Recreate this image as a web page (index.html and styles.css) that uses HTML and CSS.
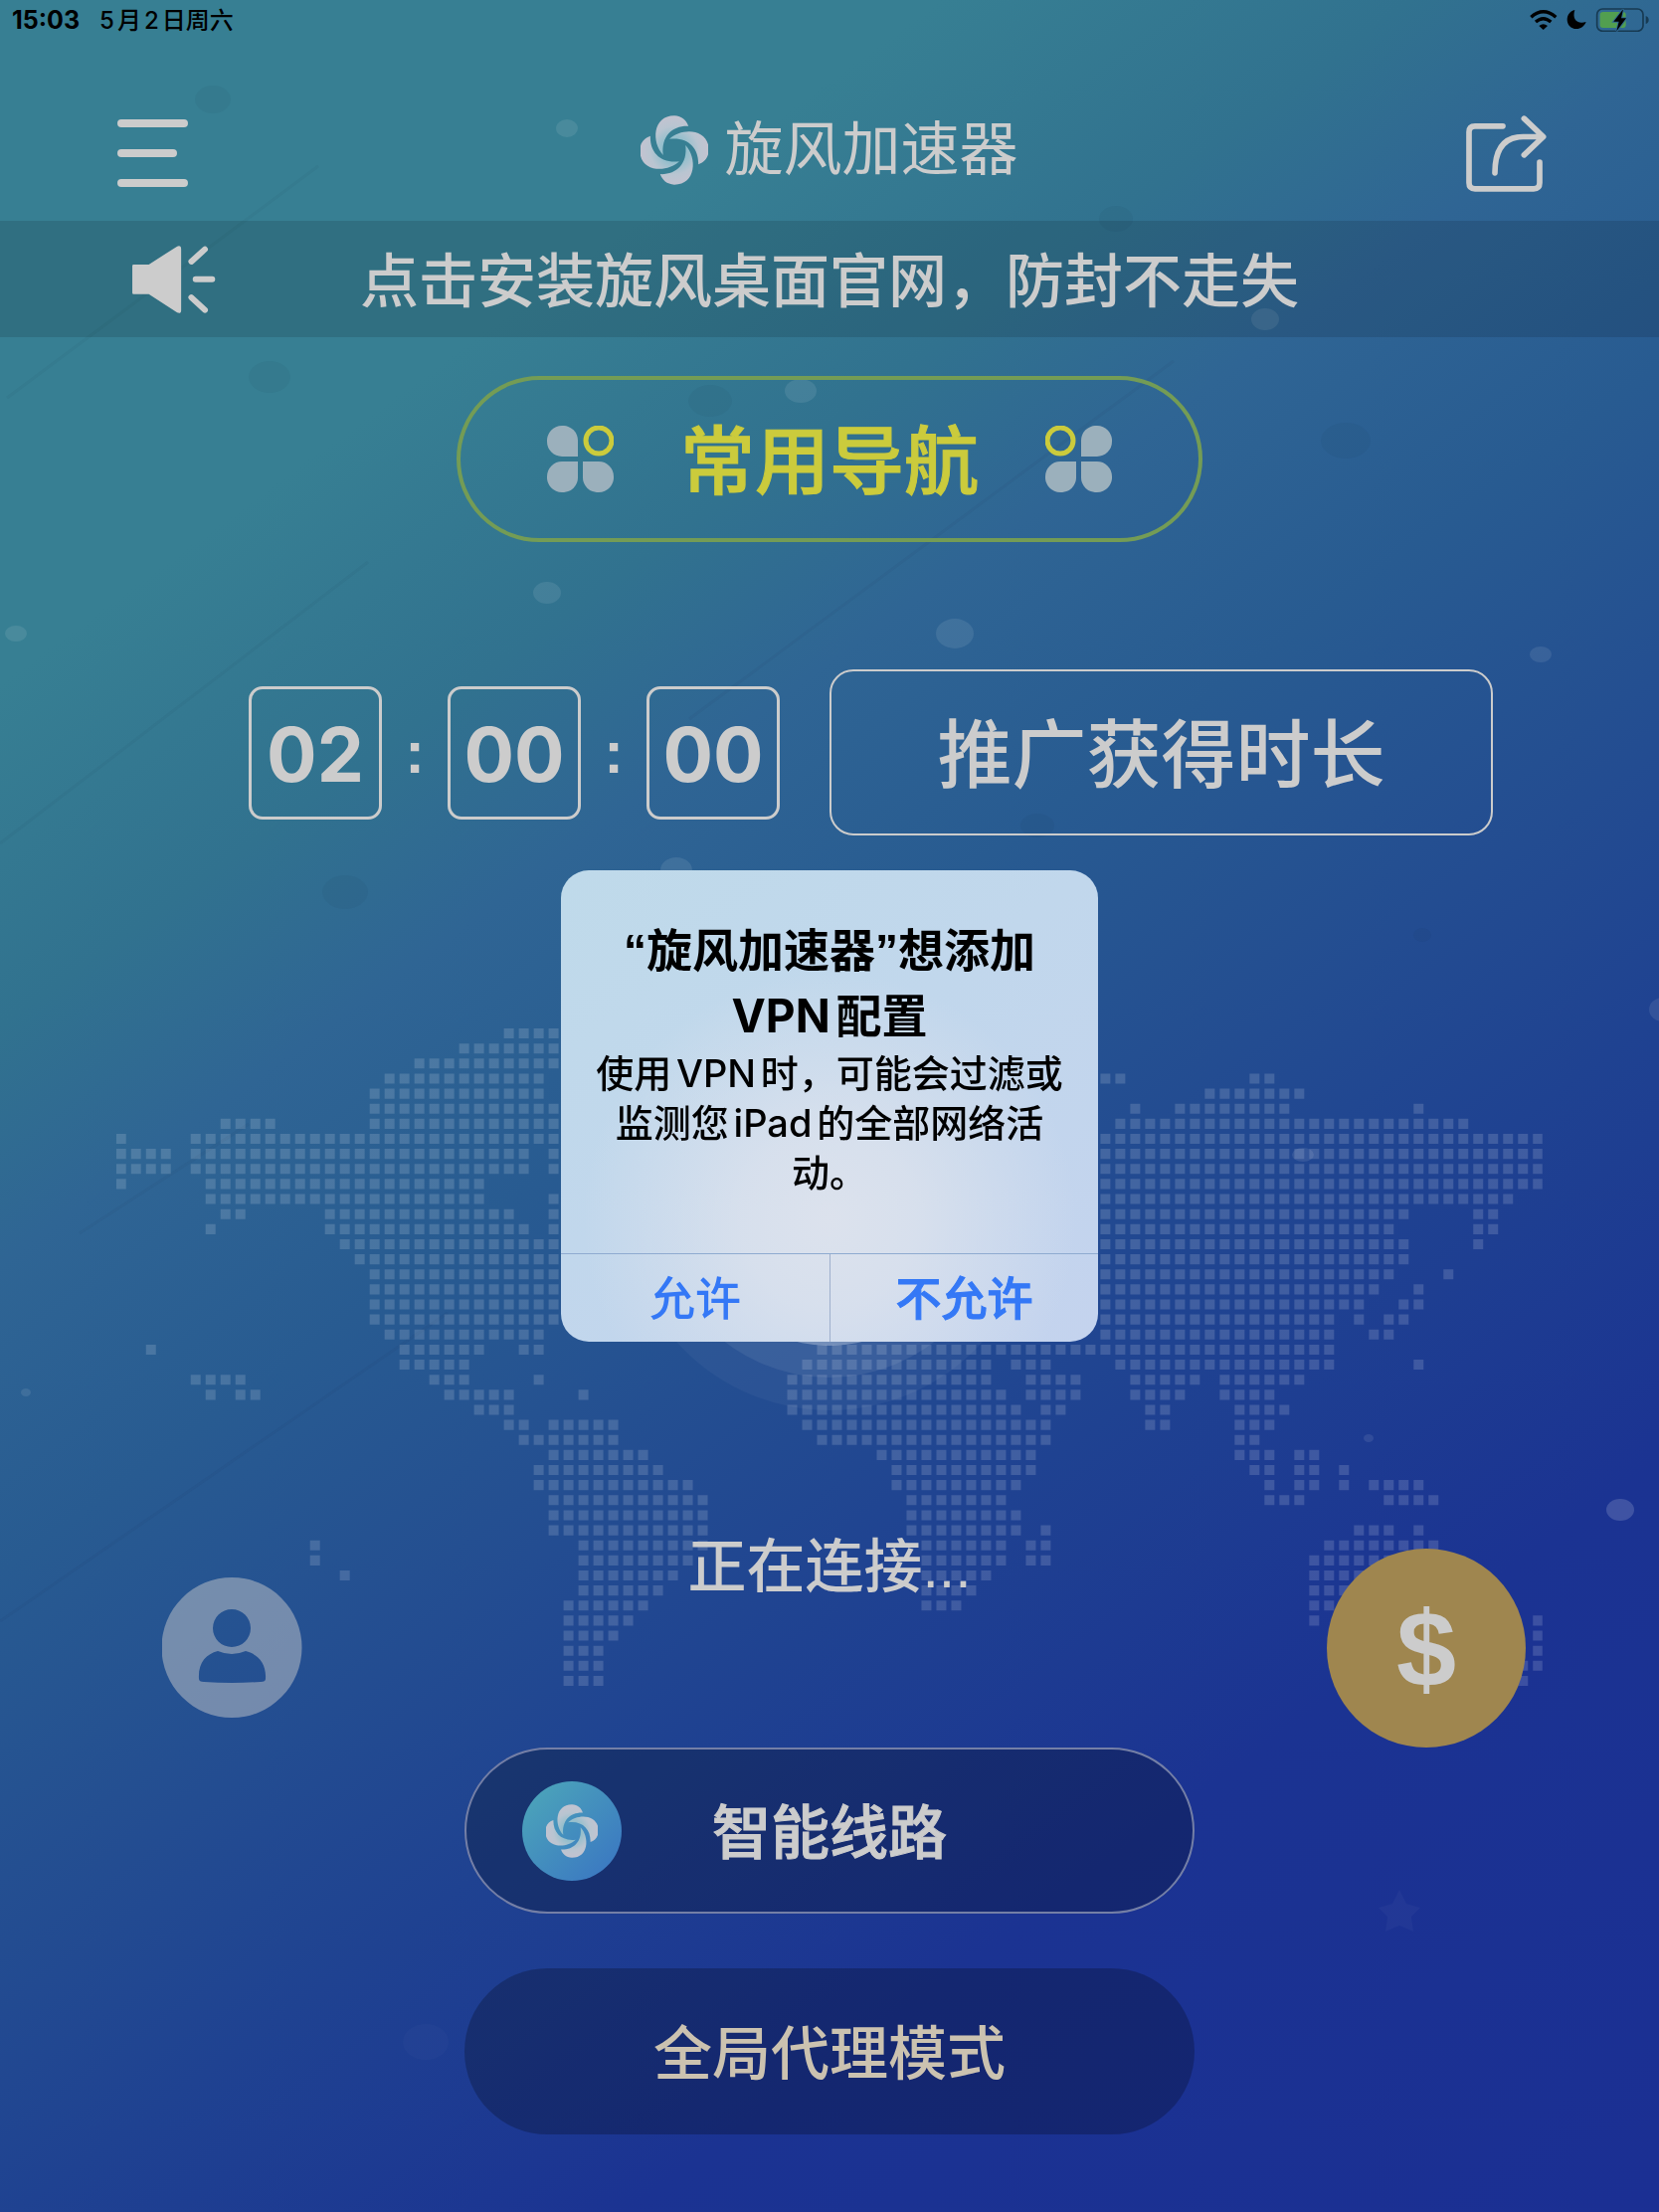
FILE: index.html
```html
<!DOCTYPE html>
<html lang="zh-CN">
<head>
<meta charset="utf-8">
<meta name="viewport" content="width=device-width, initial-scale=1">
<title>旋风加速器</title>
<link rel="stylesheet" href="styles.css">
</head>
<body>
<svg class="defs" aria-hidden="true">
  <defs>
    <radialGradient id="blade" gradientUnits="userSpaceOnUse" cx="125" cy="135" r="105">
      <stop offset="0.3" stop-color="#8bbdcb"/>
      <stop offset="0.7" stop-color="#b9c5d1"/>
      <stop offset="1" stop-color="#c3c3d0"/>
    </radialGradient>
    <symbol id="swirl" viewBox="24 29 202 212">
      <g fill="url(#blade)">
        <path d="M91 150C55 112 58 30 125 30C148 31 162 44 168 62C120 60 84 92 91 150Z"/>
        <path transform="rotate(90 125 135)" d="M91 150C55 112 58 30 125 30C148 31 162 44 168 62C120 60 84 92 91 150Z"/>
        <path transform="rotate(180 125 135)" d="M91 150C55 112 58 30 125 30C148 31 162 44 168 62C120 60 84 92 91 150Z"/>
        <path transform="rotate(270 125 135)" d="M91 150C55 112 58 30 125 30C148 31 162 44 168 62C120 60 84 92 91 150Z"/>
      </g>
    </symbol>
    <symbol id="clover" viewBox="0 0 67 67">
      <g fill="#9bb0bc">
        <path d="M15 0A15 15 0 0 1 31 16V31H15A15 15 0 0 1 0 16A15 15 0 0 1 15 0Z"/>
        <path d="M31 36H15A15 15 0 0 0 0 51A15 15 0 0 0 15 67A15 15 0 0 0 31 51Z"/>
        <path d="M36 36H52A15 15 0 0 1 67 51A15 15 0 0 1 52 67A15 15 0 0 1 36 51Z"/>
      </g>
      <circle cx="52" cy="15" r="13" fill="none" stroke="#cbcb3c" stroke-width="5"/>
    </symbol>
  </defs>
</svg>

<div class="app">
  <svg class="bubbles" viewBox="0 0 1668 2224" preserveAspectRatio="none" aria-hidden="true">
    <g fill="#fff" fill-opacity="0.09">
      <ellipse cx="570" cy="129" rx="11" ry="9"/>
      <ellipse cx="805" cy="393" rx="16" ry="12"/>
      <ellipse cx="1272" cy="321" rx="14" ry="11"/>
      <ellipse cx="550" cy="596" rx="14" ry="11"/>
      <ellipse cx="960" cy="637" rx="19" ry="15"/>
      <ellipse cx="16" cy="637" rx="11" ry="8"/>
      <ellipse cx="1549" cy="658" rx="11" ry="8"/>
      <ellipse cx="680" cy="875" rx="16" ry="13"/>
      <ellipse cx="1310" cy="1161" rx="11" ry="7"/>
      <ellipse cx="1376" cy="1446" rx="5" ry="4"/>
      <ellipse cx="26" cy="1400" rx="5" ry="4"/>
      <ellipse cx="1672" cy="1015" rx="14" ry="12"/>
    </g>
    <ellipse cx="1629" cy="1518" rx="14" ry="11" fill="#fff" fill-opacity="0.16"/>
    <ellipse cx="428" cy="2053" rx="23" ry="18" fill="#fff" fill-opacity="0.02"/>
    <g fill="#123" fill-opacity="0.05">
      <ellipse cx="214" cy="100" rx="18" ry="14"/>
      <ellipse cx="271" cy="379" rx="21" ry="16"/>
      <ellipse cx="714" cy="403" rx="22" ry="16"/>
      <ellipse cx="1353" cy="443" rx="25" ry="18"/>
      <ellipse cx="347" cy="897" rx="23" ry="17"/>
      <ellipse cx="1043" cy="830" rx="17" ry="12"/>
      <ellipse cx="1122" cy="220" rx="17" ry="13"/>
      <ellipse cx="1430" cy="940" rx="9" ry="7"/>
    </g>
    <path fill="#fff" fill-opacity="0.03" d="M1407 1900L1414 1914L1428 1918L1419 1927L1421 1942L1407 1936L1393 1942L1395 1927L1386 1918L1400 1914Z"/>
    <path fill="none" stroke="#123" stroke-opacity="0.04" stroke-width="3" d="M7 400L320 167M693 723L1180 363M0 848L370 565M80 1240L250 1130M0 1630L450 1320"/>
  </svg>

  <div class="statusbar">
    <div class="clock"><span class="time">15:03</span><span>5月2日周六</span></div>
    <svg class="indicators" viewBox="235 24 360 72" role="img" aria-label="Wi-Fi，勿扰模式，正在充电">
      <g fill="none" stroke="#000" stroke-width="10">
        <path d="M239 52Q276 19 314 52"/>
        <path d="M253 66Q276 46 299 66"/>
      </g>
      <path d="M263 78Q276 67 289 78L276 90Z"/>
      <path d="M371 30C362 58 378 74 405 66C399 80 389 87 376 87C359 87 348 74 348 59C348 45 357 33 371 30Z"/>
      <rect x="438" y="27" width="139" height="67" rx="17" fill="none" stroke="#173a52" stroke-width="5"/>
      <path fill="#173a52" d="M585 48Q594 51 594 60Q594 69 585 72Z"/>
      <rect x="447" y="36" width="78" height="48" rx="9" fill="#529f50"/>
      <path stroke="#2f6892" stroke-width="6" paint-order="stroke" d="M517 28L488 65H504L497 94L526 55H511Z"/>
    </svg>
  </div>

  <header class="header">
    <button class="icon-btn menu" type="button" aria-label="菜单">
      <svg width="72" height="68" viewBox="0 0 72 68" stroke="#ccc" stroke-width="8" stroke-linecap="round"><path d="M4 4H67M4 34H56M4 64H67"/></svg>
    </button>
    <h1 class="brand"><svg width="68" height="70" aria-hidden="true"><use href="#swirl"/></svg>旋风加速器</h1>
    <button class="icon-btn share" type="button" aria-label="分享">
      <svg width="81" height="77" viewBox="43 347 243 230" fill="none" stroke="#ccc" stroke-width="17" stroke-linecap="round" stroke-linejoin="round"><path d="M154 379H70Q52 379 52 397V550Q52 568 70 568H247Q265 568 265 550V488M130 520C130 440 165 411 215 411H274M218 356L276 411L218 466"/></svg>
    </button>
  </header>

  <div class="notice">
    <svg width="85" height="68" viewBox="398 740 254 205" aria-hidden="true">
      <path fill="#ccc" d="M404 797H450L536 742Q548 738 548 750V936Q548 948 536 943L450 887H404Q400 887 400 883V801Q400 797 404 797Z"/>
      <path stroke="#ccc" stroke-width="18" stroke-linecap="round" d="M579 788L620 751M592 842H642M579 897L620 935"/>
    </svg>
    <a href="#install">点击安装旋风桌面官网，防封不走失</a>
  </div>

  <main class="main">
    <svg class="map" viewBox="0 0 287 131" preserveAspectRatio="none" aria-hidden="true">
      <!-- one row of the grid per line; every cell is two units wide with a one unit gap -->
      <path d="M78 1h11
      M69 4h20
      M60 7h29
      M54 10h32M198 10h5M228 10h5
      M51 13h35M219 13h20
      M51 16h38M204 16h2M213 16h23M261 16h2
      M21 19h11M51 19h38M201 19h71
      M0 22h2M15 22h74M198 22h89
      M0 25h11M15 25h68M87 25h2M198 25h89
      M0 28h11M15 28h68M87 28h2M198 28h89
      M0 31h2M18 31h56M198 31h89
      M18 34h56M87 34h2M198 34h83
      M21 37h5M42 37h38M87 37h2M198 37h62M273 37h5
      M18 40h2M42 40h41M87 40h2M198 40h59M273 40h5
      M45 43h44M198 43h62M273 43h2
      M48 46h41M198 46h62
      M51 49h38M198 49h59M267 49h2
      M51 52h38M198 52h56M261 52h2
      M51 55h38M198 55h53M258 55h5
      M51 58h38M198 58h47M249 58h2M255 58h5
      M54 61h32M198 61h47M252 61h5
      M6 64h2M57 64h17M81 64h5M141 64h104
      M57 67h14M138 67h38M180 67h8M201 67h44M261 67h2
      M15 70h11M63 70h8M84 70h2M135 70h41M183 70h11M204 70h14M222 70h17
      M18 73h2M24 73h5M66 73h14M93 73h2M135 73h44M183 73h11M204 73h11M222 73h11
      M72 76h8M135 76h47M186 76h5M207 76h5M225 76h11
      M78 79h5M87 79h14M138 79h50M207 79h5M225 79h8
      M81 82h20M141 82h47M225 82h5
      M87 85h20M153 85h32M225 85h8M237 85h5
      M84 88h26M156 88h29M228 88h5M237 88h5M246 88h2
      M84 91h32M156 91h26M231 91h2M237 91h5M246 91h2M252 91h11
      M87 94h32M159 94h20M231 94h8M255 94h11
      M87 97h32M159 97h23
      M87 100h32M159 100h23M186 100h2M249 100h8M261 100h2
      M39 103h2M93 103h26M162 103h17M183 103h5M243 103h23
      M39 106h2M93 106h23M162 106h17M183 106h5M240 106h26
      M45 109h2M93 109h20M162 109h14M240 109h26
      M93 112h17M162 112h11M240 112h14
      M90 115h17M162 115h8M240 115h8
      M90 118h14M240 118h2M285 118h2
      M90 121h11M285 121h2
      M90 124h8M285 124h2
      M90 127h8M282 127h5
      M90 130h8M282 130h2"/>
    </svg>

    <a class="nav-link" href="#nav">
      <svg width="67" height="67" aria-hidden="true"><use href="#clover"/></svg>
      <span>常用导航</span>
      <svg class="mirrored" width="67" height="67" aria-hidden="true"><use href="#clover"/></svg>
    </a>

    <section class="time-row">
      <div class="countdown" role="timer" aria-label="剩余时长">
        <span class="digits">02</span><span class="colon">:</span><span class="digits">00</span><span class="colon">:</span><span class="digits">00</span>
      </div>
      <button class="earn" type="button">推广获得时长</button>
    </section>

    <div class="stage">
      <svg class="halo" viewBox="0 0 412 412" aria-hidden="true">
        <g fill="#fff"><circle cx="206" cy="206" r="206" fill-opacity="0.04"/><circle cx="206" cy="206" r="173" fill-opacity="0.07"/><circle cx="206" cy="206" r="141" fill-opacity="0.3"/></g>
      </svg>
    </div>

    <section class="status-row">
      <button class="icon-btn user" type="button" aria-label="我的账户">
        <svg width="141" height="141" viewBox="0 0 141 141"><path fill="#ccc" fill-opacity="0.48" fill-rule="evenodd" d="M70 0A70 70 0 1 1 70 141A70 70 0 1 1 70 0ZM70 32A19 19 0 1 0 70 70A19 19 0 1 0 70 32ZM56 74C44 77 36 86 37 102Q37 105 42 105Q70 107 99 105Q104 105 104 102C105 86 96 77 84 74Q70 80 56 74Z"/></svg>
      </button>
      <p class="status" role="status">正在连接...</p>
      <button class="coin" type="button" aria-label="充值">$</button>
    </section>

    <button class="pill line" type="button">
      <span class="line-logo"><svg width="52" height="54" aria-hidden="true"><use href="#swirl"/></svg></span>
      <span class="line-name">智能线路</span>
    </button>
    <button class="pill mode" type="button">全局代理模式</button>
  </main>
</div>

<div class="overlay">
  <div class="alert" role="alertdialog" aria-modal="true" aria-labelledby="alert-title" aria-describedby="alert-text">
    <h2 id="alert-title"><span class="quote">“</span>旋风加速器<span class="quote">”</span>想添加<br>VPN配置</h2>
    <p id="alert-text">使用VPN时，可能会过滤或<br>监测您iPad的全部网络活<br>动。</p>
    <div class="alert-actions">
      <button type="button">允许</button>
      <button class="preferred" type="button">不允许</button>
    </div>
  </div>
</div>
</body>
</html>
```
FILE: styles.css
```css
* {
  box-sizing: border-box;
}

body {
  margin: 0;
  color: #ccc;
  font-family: "Liberation Sans", "Noto Sans CJK SC", sans-serif;
  font-size: 59px;
  font-weight: 500;
}

h1, h2, p {
  margin: 0;
}

button {
  margin: 0;
  padding: 0;
  border: 0;
  background: none;
  color: inherit;
  font: inherit;
}

a {
  color: inherit;
  text-decoration: none;
}

svg {
  display: block;
}

.defs {
  position: absolute;
  width: 0;
  height: 0;
}

.app {
  position: relative;
  overflow: hidden;
  min-height: 100vh;
  padding-bottom: 78px;
  background: linear-gradient(144deg, #377f93 0%, #377f93 20%, #31728f 30%, #2f6594 37%, #285b91 46%, #244f91 55%, #1f4291 65%, #1b3392 78%, #1b2f93 100%);
}

.bubbles {
  position: absolute;
  inset: 0;
  width: 100%;
  height: 100%;
}

.statusbar,
.header,
.notice,
.main {
  position: relative;
}

.statusbar {
  display: flex;
  align-items: center;
  justify-content: space-between;
  height: 40px;
  padding: 0 10px 0 12px;
  color: #000;
  font-family: Inter, "Noto Sans CJK SC", sans-serif;
  font-size: 24px;
  font-weight: 500;
  line-height: 32px;
}

.clock {
  display: flex;
  align-items: baseline;
  gap: 20px;
  text-autospace: normal;
}

.time {
  font-size: 25px;
  font-weight: 700;
}

.indicators {
  width: 120px;
  height: 24px;
}

.header {
  display: grid;
  grid-template-columns: 1fr auto 1fr;
  align-items: center;
  height: 182px;
  padding: 40px 115px 0;
}

.icon-btn {
  justify-self: start;
}

.menu {
  margin: 6px 0 0 3px;
}

.share {
  justify-self: end;
  margin: 6px -2px 0 0;
}

.brand {
  display: flex;
  align-items: center;
  gap: 16px;
  font-size: 59px;
  font-weight: 400;
  line-height: 80px;
}

.notice {
  display: grid;
  grid-template-columns: 1fr auto 1fr;
  align-items: center;
  height: 117px;
  padding: 0 132px;
  background: rgba(0, 0, 0, 0.12);
}

.notice a {
  padding-bottom: 5px;
}

.main {
  display: flex;
  flex-direction: column;
  align-items: center;
  padding-top: 39px;
}

.main > * {
  position: relative;
}

.main > .map {
  position: absolute;
  top: 695px;
  left: 50%;
  width: 86%;
  height: 661px;
  translate: -50%;
  fill: none;
  stroke: rgba(255, 255, 255, 0.15);
  stroke-width: 2;
  stroke-dasharray: 2 1;
}

.nav-link {
  display: flex;
  align-items: center;
  justify-content: center;
  gap: 67px;
  width: 750px;
  height: 167px;
  border: 4px solid #749c55;
  border-radius: 84px;
  color: #cbcb3c;
  font-size: 75px;
}

.nav-link span {
  padding-bottom: 6px;
  -webkit-text-stroke: 1px currentColor;
}

.mirrored {
  transform: scaleX(-1);
}

.time-row {
  display: flex;
  align-items: center;
  justify-content: center;
  gap: 50px;
  width: 100%;
  margin-top: 128px;
  padding-left: 83px;
}

.countdown {
  display: flex;
  align-items: center;
}

.digits {
  width: 134px;
  height: 134px;
  border: 3px solid #ccc;
  border-radius: 14px;
  font-family: Inter, sans-serif;
  font-size: 75px;
  font-weight: 700;
  line-height: 132px;
  text-align: center;
}

.colon {
  width: 66px;
  font-weight: 700;
  text-align: center;
}

.earn {
  width: 667px;
  height: 167px;
  padding-bottom: 6px;
  border: 2px solid #ccc;
  border-radius: 24px;
  font-size: 75px;
}

.stage {
  height: 691px;
}

.halo {
  position: absolute;
  top: 166px;
  left: 50%;
  width: 412px;
  translate: -50%;
}

.status-row {
  display: grid;
  grid-template-columns: 1fr auto 1fr;
  align-items: end;
  width: 100%;
  height: 226px;
  padding: 0 134px;
}

.user {
  margin: 0 0 30px 29px;
}

.status {
  align-self: start;
  line-height: 90px;
}

.coin {
  justify-self: end;
  width: 200px;
  height: 200px;
  border-radius: 50%;
  background: #9f864f;
  font-size: 108px;
  font-weight: 700;
}

.pill {
  width: 734px;
  height: 167px;
  border-radius: 84px;
  background: rgba(0, 0, 0, 0.23);
}

.line {
  display: grid;
  grid-template-columns: 1fr auto 1fr;
  align-items: center;
  padding: 0 56px;
  border: 2px solid #747fa6;
}

.line-name {
  padding-bottom: 5px;
  -webkit-text-stroke: 1px currentColor;
}

.line-logo {
  display: grid;
  place-items: center;
  width: 100px;
  height: 100px;
  border-radius: 50%;
  background: linear-gradient(135deg, #4ba3ba 10%, #3a76c2 95%);
}

.mode {
  margin-top: 55px;
  padding-bottom: 5px;
  color: #cbc2b0;
}

.overlay {
  position: fixed;
  inset: 0;
  display: grid;
  place-items: center;
  font-family: Inter, "Noto Sans CJK SC", sans-serif;
}

.alert {
  overflow: hidden;
  width: 540px;
  padding-top: 47px;
  border-radius: 28px;
  background:
    radial-gradient(circle at 50% 74%, #dce2ed 0%, rgba(220, 226, 237, 0.8) 20%, rgba(220, 226, 237, 0) 56%),
    linear-gradient(144deg, #bfdaea 0%, #c1d7ec 45%, #c4d3ee 100%);
  color: #000;
  text-align: center;
  text-autospace: normal;
  white-space: nowrap;
}

.alert h2 {
  font-size: 46px;
  font-weight: 700;
  line-height: 66px;
}

.quote {
  font-family: "Liberation Sans", sans-serif;
  line-height: 1;
}

.alert p {
  font-size: 38px;
  font-weight: 500;
  line-height: 50px;
}

.alert-actions {
  display: grid;
  grid-template-columns: 1fr 1fr;
  margin-top: 56px;
  border-top: 1px solid #8fabd0;
}

.alert-actions button {
  height: 88px;
  padding-bottom: 6px;
  color: #3478f6;
  font-size: 46px;
}

.alert-actions .preferred {
  border-left: 1px solid #9fb0cd;
  -webkit-text-stroke: 1px currentColor;
}
```
